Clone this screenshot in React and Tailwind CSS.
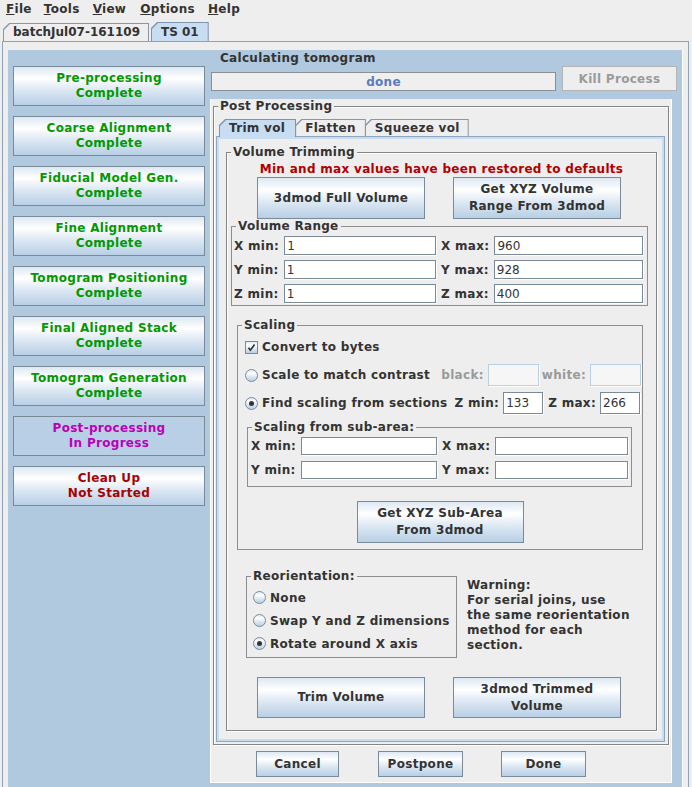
import React from "react";

function Btn({ className = "", children }) {
  return (
    <div
      className={
        "flex items-center justify-center text-center border border-[#7a8a99] leading-[17px] text-[#333333] shrink-0 bg-[linear-gradient(to_bottom,#dde8f3_0%,#ffffff_30%,#dde8f3_60%,#b8cfe5_100%)] " +
        className
      }
    >
      <div>{children}</div>
    </div>
  );
}

function Field({ value = "", className = "", disabled = false }) {
  return (
    <div
      className={
        "h-full flex items-center pl-[2px] font-normal tracking-normal text-[#333333] border shadow-[1px_1px_0_#ffffff] " +
        (disabled ? "border-[#b8cfe5] bg-[#f6f6f6] " : "border-[#7a8a99] bg-white ") +
        className
      }
    >
      {value}
    </div>
  );
}

function Group({ title, etched = false, className = "", children }) {
  return (
    <fieldset
      className={
        "border min-w-0 " +
        (etched
          ? "border-[#858585] shadow-[inset_1px_1px_0_#ffffff,1px_1px_0_#ffffff] "
          : "border-[#8e8e8e] ") +
        className
      }
    >
      <legend className="ml-[4px] px-[2px] leading-[14px] bg-[#eeeeee] text-[#333333]">
        {title}
      </legend>
      {children}
    </fieldset>
  );
}

function Tab({ children, selected = false, className = "", inner = "pl-[9px] pr-[11px]" }) {
  return (
    <div
      className={
        "p-[1px] pb-0 [clip-path:polygon(0_6px,6px_0,100%_0,100%_100%,0_100%)] " +
        (selected ? "bg-[#7d93ab] " : "bg-[#8a96a2] ") +
        className
      }
    >
      <div
        className={
          "h-full flex items-center leading-[15px] [clip-path:polygon(0_6px,6px_0,100%_0,100%_100%,0_100%)] " +
          inner +
          (selected ? " bg-[#c8ddf2]" : " bg-[#eeeeee]")
        }
      >
        {children}
      </div>
    </div>
  );
}

function Radio({ on = false }) {
  return (
    <span className="w-[13px] h-[13px] rounded-full border border-[#7a8a99] flex items-center justify-center shrink-0 bg-[linear-gradient(to_bottom,#dde8f3_0%,#ffffff_30%,#dde8f3_60%,#b8cfe5_100%)]">
      {on && <span className="w-[5px] h-[5px] rounded-full bg-[#333333]" />}
    </span>
  );
}

function Check() {
  return (
    <span className="w-[13px] h-[13px] border border-[#7a8a99] flex items-center justify-center shrink-0 bg-[linear-gradient(to_bottom,#dde8f3_0%,#ffffff_30%,#dde8f3_60%,#b8cfe5_100%)]">
      <svg width="9" height="9" viewBox="0 0 9 9">
        <path d="M1.5 4.8 L3.4 7.2 L7.6 1.6" stroke="#333333" strokeWidth="1.7" fill="none" />
      </svg>
    </span>
  );
}

function LabeledField({ label, value, className = "" }) {
  return (
    <div className={"flex items-center gap-[5px] " + className}>
      <span className="shrink-0">{label}</span>
      <Field value={value} className="flex-1 min-w-0" />
    </div>
  );
}

const steps = [
  ["Pre-processing", "Complete", "text-[#009900]"],
  ["Coarse Alignment", "Complete", "text-[#009900]"],
  ["Fiducial Model Gen.", "Complete", "text-[#009900]"],
  ["Fine Alignment", "Complete", "text-[#009900]"],
  ["Tomogram Positioning", "Complete", "text-[#009900]"],
  ["Final Aligned Stack", "Complete", "text-[#009900]"],
  ["Tomogram Generation", "Complete", "text-[#009900]"],
  ["Post-processing", "In Progress", "text-[#bb00bb]"],
  ["Clean Up", "Not Started", "text-[#a80000]"],
];

export default function App() {
  return (
    <div className="w-[692px] h-[787px] overflow-hidden bg-[#eeeeee] font-['DejaVu_Sans',sans-serif] text-[12px] font-bold tracking-[0.3px] text-[#333333] flex flex-col">
      {/* Menu bar */}
      <div className="h-[21px] shrink-0 flex items-start pt-[2px] leading-[15px]">
        <span className="ml-[6px]"><span className="underline">F</span>ile</span>
        <span className="ml-[12px]"><span className="underline">T</span>ools</span>
        <span className="ml-[13px]"><span className="underline">V</span>iew</span>
        <span className="ml-[14px]"><span className="underline">O</span>ptions</span>
        <span className="ml-[13px]"><span className="underline">H</span>elp</span>
      </div>

      {/* Top tabs */}
      <div className="h-[20px] shrink-0 flex items-end pl-[3px] tracking-normal">
        <Tab className="h-[18px]" inner="pl-[9px] pr-[8px]">batchJul07-161109</Tab>
        <Tab selected className="h-[19px] ml-[2px]" inner="pl-[9px] pr-[9px]">TS 01</Tab>
      </div>

      {/* Main tab area */}
      <div className="h-[760px] shrink-0 ml-[2px] mr-[3px] border border-[#8da2b8] pl-[5px] pr-[6px] pt-[8px] flex">
        <div className="flex-1 bg-[#b0c9df] flex shadow-[1px_0_0_#ffffff]">
          {/* Left column */}
          <div className="w-[202px] shrink-0 pl-[5px] pt-[16px] flex flex-col gap-[10px]">
            {steps.map(([a, b, c], i) =>
              i === 7 ? (
                <div
                  key={i}
                  className={"w-[192px] h-[40px] border border-[#7a8a99] bg-[#b8cfe5] flex flex-col items-center justify-center leading-[15px] " + c}
                >
                  <span>{a}</span>
                  <span>{b}</span>
                </div>
              ) : (
                <div
                  key={i}
                  className={"w-[192px] h-[40px] border border-[#7a8a99] flex flex-col items-center justify-center leading-[15px] bg-[linear-gradient(to_bottom,#dde8f3_0%,#ffffff_30%,#dde8f3_60%,#b8cfe5_100%)] " + c}
                >
                  <span>{a}</span>
                  <span>{b}</span>
                </div>
              )
            )}
          </div>

          {/* Right column */}
          <div className="flex-1 flex flex-col">
            <div className="h-[16px] pl-[10px] pt-[1px] leading-[15px]">Calculating tomogram</div>
            <div className="h-[25px] flex items-end">
              <div className="ml-[1px] w-[345px] h-[19px] border border-[#8a8f95] bg-[#efefef] flex items-center justify-center text-[#5b7bbd]">
                done
              </div>
              <div className="ml-[6px] w-[115px] h-[25px] border border-[#b4b4b4] bg-[#eeeeee] flex items-center justify-center text-[#9a9a9a]">
                Kill Process
              </div>
            </div>

            {/* Gray container */}
            <div className="mt-[8px] w-[462px] h-[684px] bg-[#eeeeee] pl-[3px] pr-[3px] flex flex-col shadow-[inset_-1px_-1px_0_#ffffff,inset_1px_0_0_#ffffff]">
              <Group title="Post Processing" etched className="w-[456px]">
                <div className="pl-[2px] pr-[3px] pt-[6px] pb-[2px]">
                  <div className="relative z-10 h-[17px] flex items-end pl-[3px]">
                    <Tab selected className="h-[18px] mb-[-1px]" inner="pl-[9px] pr-[10px]">Trim vol</Tab>
                    <Tab className="h-[17px] ml-[-1px]" inner="pl-[9px] pr-[9px]">Flatten</Tab>
                    <Tab className="h-[17px] ml-[-1px]" inner="pl-[9px] pr-[8px]">Squeeze vol</Tab>
                  </div>
                  <div className="border border-[#8fa6bd] p-[2px] bg-[#c8ddf2]">
                    <div className="bg-[#eeeeee] pl-[7px] pr-[5px] pt-[6px] pb-[8px]">
                      <Group title="Volume Trimming" etched>
                        <div className="pt-[3px] text-center leading-[15px] text-[#b00000]">
                          Min and max values have been restored to defaults
                        </div>
                        <div className="flex pl-[30px] gap-[28px]">
                          <Btn className="w-[168px] h-[42px]">3dmod Full Volume</Btn>
                          <Btn className="w-[168px] h-[42px]">
                            Get XYZ Volume
                            <br />
                            Range From 3dmod
                          </Btn>
                        </div>

                        <Group title="Volume Range" className="ml-[4px] w-[417px]">
                          <div className="grid grid-cols-2 gap-x-[5px] gap-y-[5px] pl-[2px] pr-[4px] pt-[3px] pb-[2px]">
                            <LabeledField label="X min:" value="1" className="h-[19px]" />
                            <LabeledField label="X max:" value="960" className="h-[19px]" />
                            <LabeledField label="Y min:" value="1" className="h-[19px]" />
                            <LabeledField label="Y max:" value="928" className="h-[19px]" />
                            <LabeledField label="Z min:" value="1" className="h-[19px]" />
                            <LabeledField label="Z max:" value="400" className="h-[19px]" />
                          </div>
                        </Group>

                        <Group title="Scaling" className="ml-[10px] mt-[12px] w-[406px]">
                          <div className="pb-[6px]">
                            <div className="mt-[5px] h-[20px] flex items-center gap-[4px] pl-[7px]">
                              <Check />
                              <span>Convert to bytes</span>
                            </div>
                            <div className="mt-[7px] h-[22px] flex items-center pl-[7px] pr-[1px]">
                              <Radio />
                              <span className="ml-[4px]">Scale to match contrast</span>
                              <div className="ml-auto h-full flex items-center">
                                <span className="text-[#9a9a9a]">black:</span>
                                <Field disabled className="ml-[4px] w-[51px]" />
                                <span className="ml-[3px] text-[#9a9a9a]">white:</span>
                                <Field disabled className="ml-[4px] w-[51px]" />
                              </div>
                            </div>
                            <div className="mt-[6px] h-[22px] flex items-center pl-[7px] pr-[2px]">
                              <Radio on />
                              <span className="ml-[4px]">Find scaling from sections</span>
                              <div className="ml-auto h-full flex items-center">
                                <span>Z min:</span>
                                <Field value="133" className="ml-[4px] w-[40px]" />
                                <span className="ml-[5px]">Z max:</span>
                                <Field value="266" className="ml-[4px] w-[40px]" />
                              </div>
                            </div>

                            <Group title="Scaling from sub-area:" className="ml-[9px] mt-[6px] w-[385px]">
                              <div className="grid grid-cols-2 gap-x-[5px] gap-y-[6px] pl-[3px] pr-[3px] pt-[3px] pb-[7px]">
                                <LabeledField label="X min:" value="" className="h-[18px]" />
                                <LabeledField label="X max:" value="" className="h-[18px]" />
                                <LabeledField label="Y min:" value="" className="h-[18px]" />
                                <LabeledField label="Y max:" value="" className="h-[18px]" />
                              </div>
                            </Group>

                            <div className="mt-[14px] flex justify-center">
                              <Btn className="w-[167px] h-[42px]">
                                Get XYZ Sub-Area
                                <br />
                                From 3dmod
                              </Btn>
                            </div>
                          </div>
                        </Group>

                        <div className="mt-[19px] flex items-start pl-[19px]">
                          <Group title="Reorientation:" className="w-[211px]">
                            <div className="pl-[6px] pt-[3px] pb-[2px]">
                              <div className="h-[23px] flex items-center gap-[4px]">
                                <Radio />
                                <span>None</span>
                              </div>
                              <div className="h-[23px] flex items-center gap-[4px]">
                                <Radio />
                                <span>Swap Y and Z dimensions</span>
                              </div>
                              <div className="h-[23px] flex items-center gap-[4px]">
                                <Radio on />
                                <span>Rotate around X axis</span>
                              </div>
                            </div>
                          </Group>
                          <div className="ml-[10px] mt-[9px] leading-[15px]">
                            Warning:
                            <br />
                            For serial joins, use
                            <br />
                            the same reorientation
                            <br />
                            method for each
                            <br />
                            section.
                          </div>
                        </div>

                        <div className="mt-[19px] pb-[12px] flex pl-[30px] gap-[28px]">
                          <Btn className="w-[168px] h-[41px]">Trim Volume</Btn>
                          <Btn className="w-[168px] h-[41px]">
                            3dmod Trimmed
                            <br />
                            Volume
                          </Btn>
                        </div>
                      </Group>
                    </div>
                  </div>
                </div>
              </Group>

              <div className="mt-[6px] h-[26px] flex pl-[43px]">
                <Btn className="w-[83px] h-[26px]">Cancel</Btn>
                <Btn className="ml-[39px] w-[85px] h-[26px]">Postpone</Btn>
                <Btn className="ml-[38px] w-[85px] h-[26px]">Done</Btn>
              </div>
            </div>
          </div>
        </div>
      </div>
    </div>
  );
}
